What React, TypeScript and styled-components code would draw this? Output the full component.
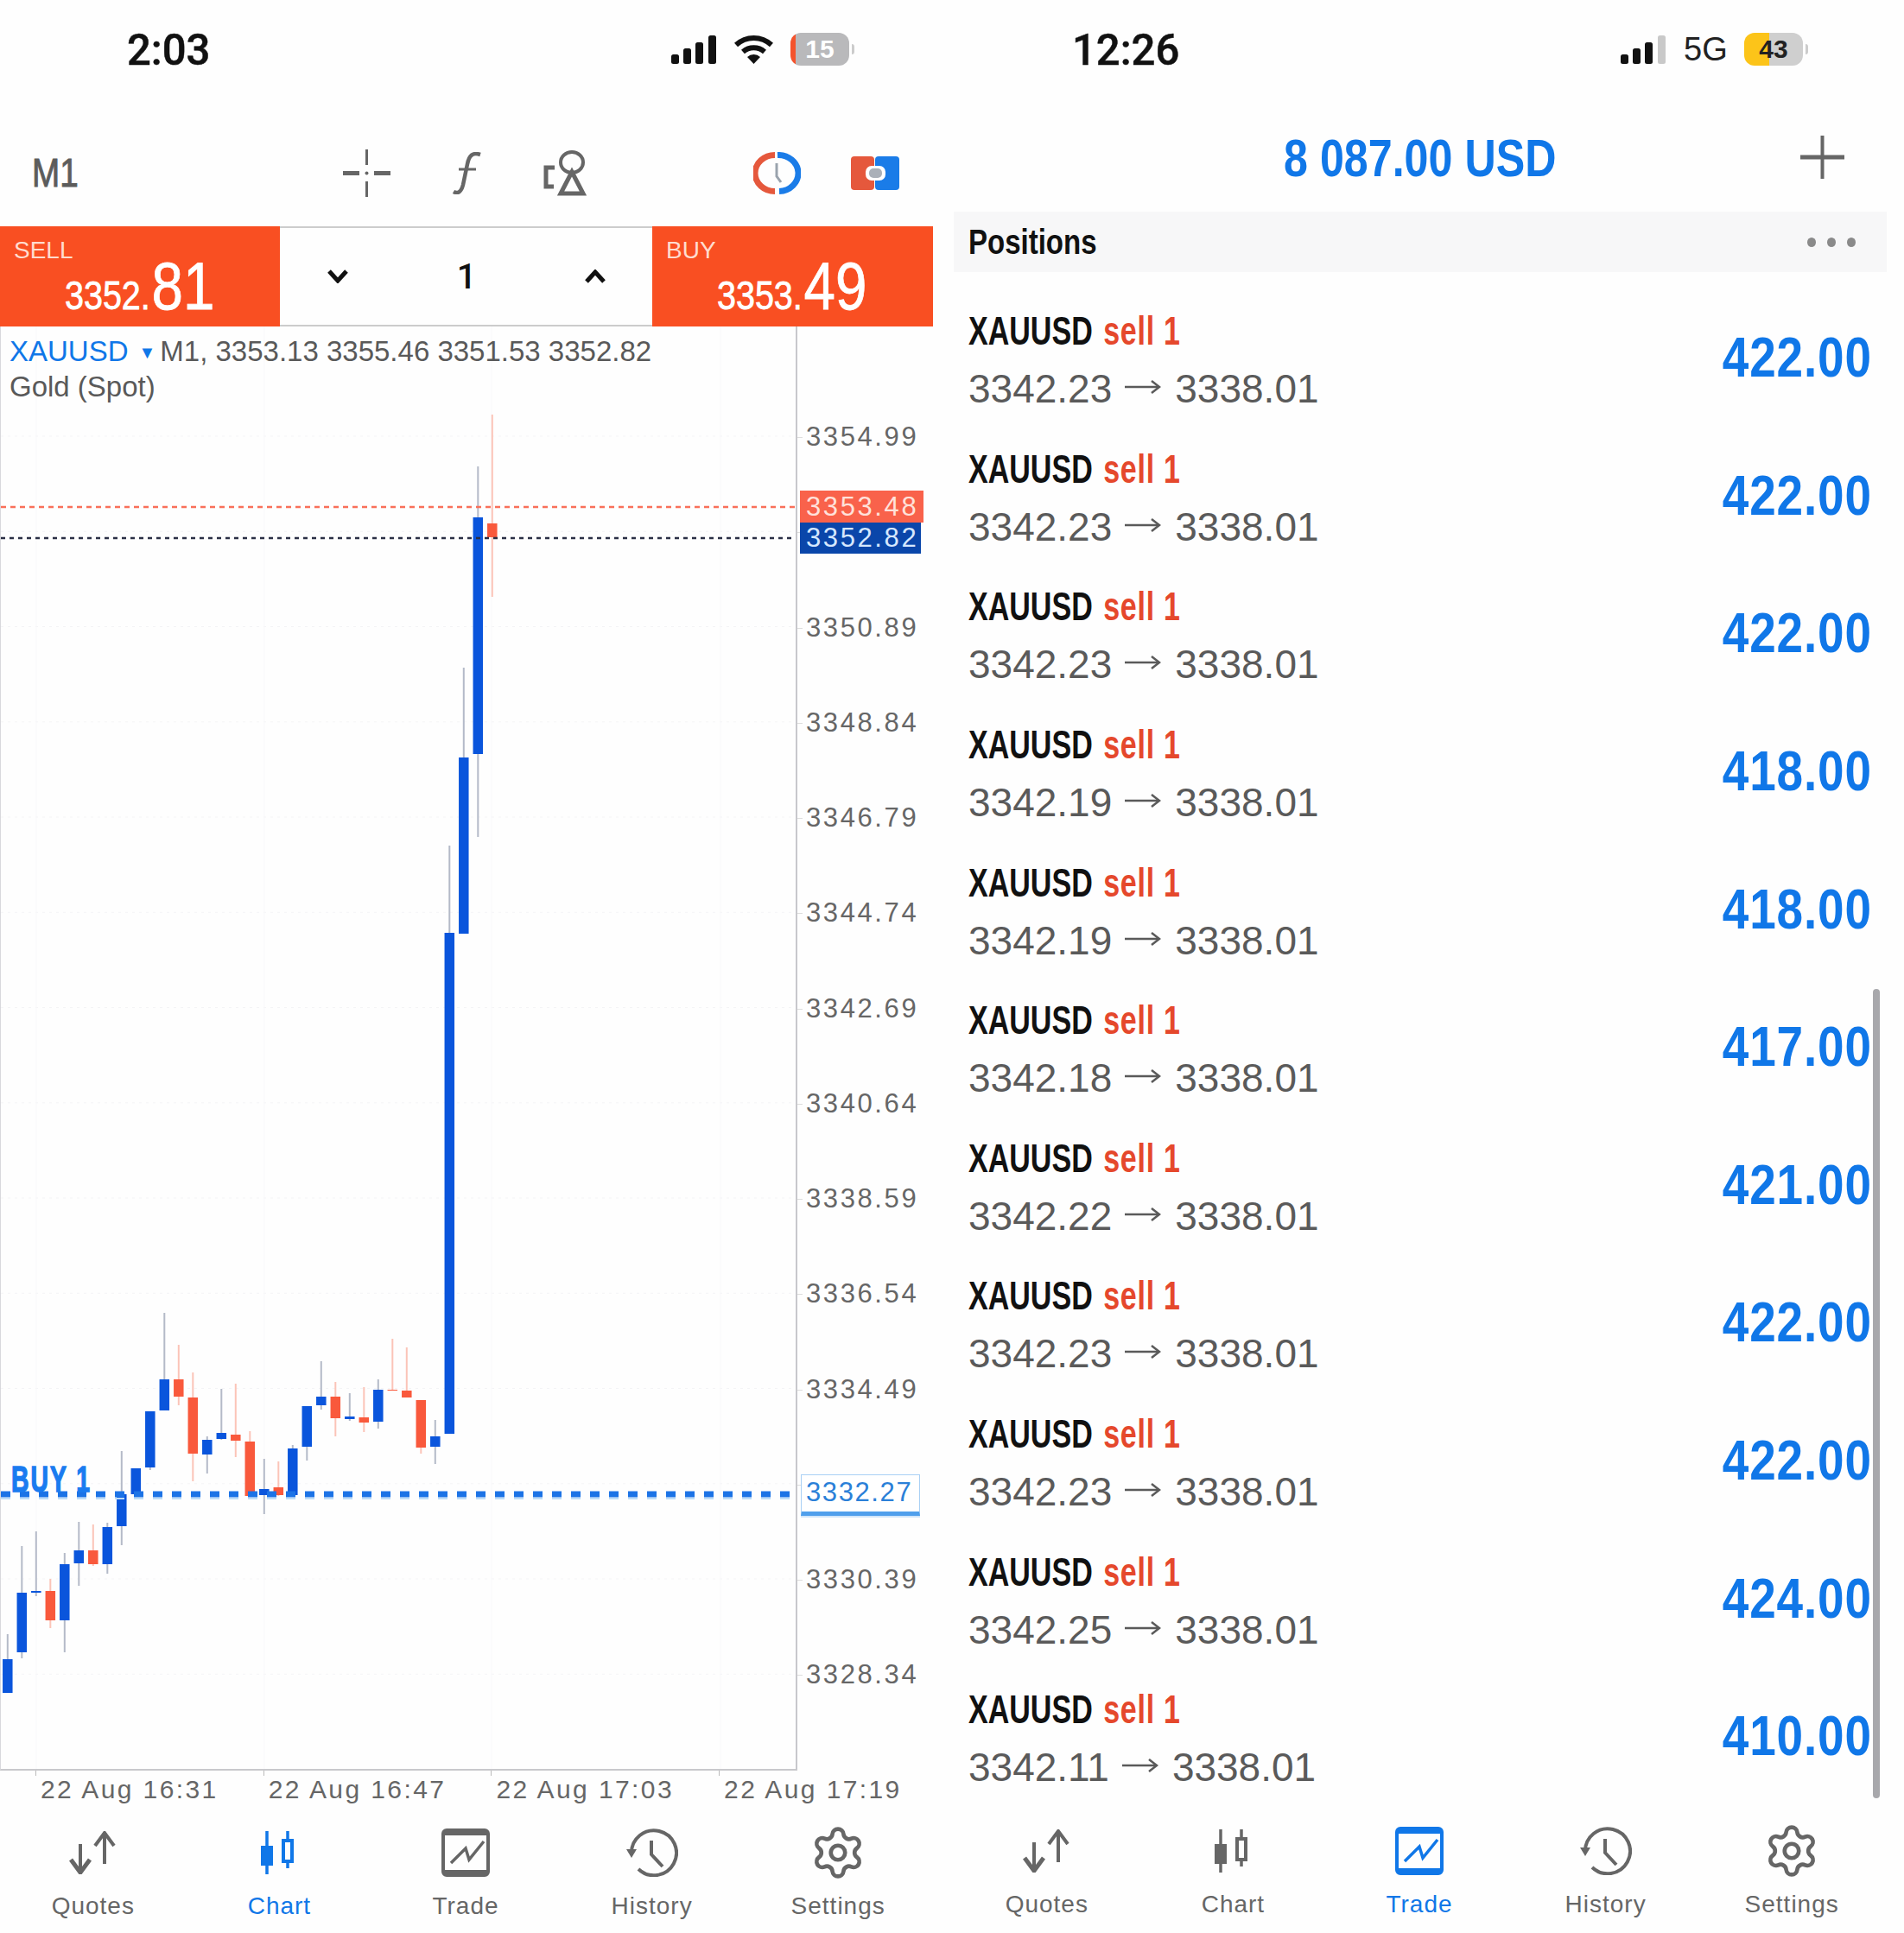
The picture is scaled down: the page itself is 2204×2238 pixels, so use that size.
import styled, { createGlobalStyle } from 'styled-components';
import { Settings as GearIcon } from 'lucide-react';
import { ReactNode } from 'react';

const SANS = `"Liberation Sans", Arial, sans-serif`;
const BLUE = '#1077e8';
const ORANGE = '#f94f22';
const GREY = '#666';

const GlobalStyle = createGlobalStyle`
  html, body {
    margin: 0;
    padding: 0;
    background: #fefefe;
    font-family: ${SANS};
    overflow: hidden;
  }
`;

const Page = styled.div`
  width: 2204px;
  height: 2238px;
  display: flex;
  gap: 24px;
`;

const Phone = styled.div`
  width: 1080px;
  display: flex;
  flex-direction: column;
`;

const StatusBar = styled.div<{ $left: number }>`
  height: 114px;
  flex: none;
  display: flex;
  align-items: center;
  justify-content: space-between;
  box-sizing: border-box;
  padding: 2px 97px 0 ${(p) => p.$left}px;
`;

const Clock = styled.div`
  font-family: Roboto, sans-serif;
  font-weight: 500;
  font-size: 50px;
  color: #111;
  -webkit-text-stroke: 0.5px #111;
  transform: scaleX(0.98);
  transform-origin: left;
`;

const StatusIcons = styled.div`
  display: flex;
  align-items: center;
  gap: 20px;
  margin-top: -2px;
`;

const Network = styled.span`
  font-size: 38px;
  color: #222;
  width: 50px;
`;

const Battery = styled.div<{ $fill: string; $rest: string; $pct: number; $ink: string }>`
  position: relative;
  width: 68px;
  height: 38px;
  border-radius: 12px;
  background: linear-gradient(
    to right,
    ${(p) => p.$fill} ${(p) => p.$pct}%,
    ${(p) => p.$rest} ${(p) => p.$pct}%
  );
  display: flex;
  align-items: center;
  justify-content: center;
  color: ${(p) => p.$ink};
  font-weight: 700;
  font-size: 30px;

  &::after {
    content: '';
    position: absolute;
    right: -6px;
    top: 13px;
    width: 3px;
    height: 12px;
    border-radius: 0 3px 3px 0;
    background: #ccc;
  }
`;

/* left phone: toolbar */
const Toolbar = styled.div`
  height: 148px;
  flex: none;
  display: flex;
  align-items: center;
  box-sizing: border-box;
  padding: 24px 0 0 37px;
`;

const Period = styled.div`
  width: 53px;
  font-size: 46px;
  color: #5c5c5c;
  -webkit-text-stroke: 1px #5c5c5c;
  transform: scaleX(0.84);
  transform-origin: left;
`;

const ToolGroup = styled.div<{ $offset: number; $gap: number }>`
  display: flex;
  align-items: center;
  margin-left: ${(p) => p.$offset}px;
  gap: ${(p) => p.$gap}px;
  color: ${GREY};

  svg {
    display: block;
  }
`;

/* left phone: sell / buy bar */
const TradeBar = styled.div`
  height: 116px;
  flex: none;
  display: grid;
  grid-template-columns: 324px 431px 325px;
`;

const PricePanel = styled.div`
  background: ${ORANGE};
  box-sizing: border-box;
  padding: 14px 0 0 16px;
  color: #fff;
  display: flex;
  flex-direction: column;
`;

const SideLabel = styled.div`
  font-size: 28px;
  line-height: 28px;
  color: #ffdccf;
`;

const PriceLine = styled.div`
  display: flex;
  align-items: baseline;
  margin: -15px 0 0 59px;
  height: 84px;
  white-space: nowrap;
  transform: scaleX(0.84);
  transform-origin: left;
  -webkit-text-stroke: 0.8px #fff;
`;

const PriceBase = styled.span`
  font-size: 47px;
  line-height: 84px;
`;

const PricePips = styled.span`
  font-size: 78px;
  line-height: 84px;
  margin-left: 2px;
`;

const Stepper = styled.div`
  border-top: 2px solid #ccc;
  border-bottom: 2px solid #ccc;
  display: flex;
  align-items: center;
  justify-content: space-between;
  padding: 0 54px 0 55px;
`;

const Lots = styled.div`
  font-family: Roboto, sans-serif;
  font-weight: 500;
  font-size: 40px;
  color: #111;
`;

/* left phone: chart */
const ChartRow = styled.div`
  height: 1672px;
  flex: none;
  display: flex;
`;

const ChartFrame = styled.div`
  position: relative;
  width: 923px;
  height: 100%;
  flex: none;
  box-sizing: border-box;
  border-right: 2px solid #c8c8cc;
  border-bottom: 2px solid #c8c8cc;
  border-left: 1px solid #d8d8dc;

  svg {
    display: block;
    width: 100%;
    height: 100%;
  }
`;

const Legend = styled.div`
  position: absolute;
  left: 10px;
  top: 8px;
  font-size: 33px;
  line-height: 41px;
  color: #595959;
  white-space: nowrap;
`;

const Symbol = styled.span`
  color: ${BLUE};
`;

const Caret = styled.span`
  color: ${BLUE};
  font-size: 20px;
  line-height: 0;
  margin: 0 5px 0 12px;
  vertical-align: 3px;
`;

const OrderTag = styled.div`
  position: absolute;
  left: 12px;
  top: 1318px;
  color: #1a7bf0;
  font-size: 43px;
  font-weight: 700;
  letter-spacing: 3px;
  line-height: 32px;
  -webkit-text-stroke: 1.5px #1a7bf0;
  transform: scaleX(0.66);
  transform-origin: left;
`;

const Axis = styled.div`
  position: relative;
  flex: 1;
  box-sizing: border-box;
  padding: 73px 0 0 10px;
`;

const AxisLabel = styled.div`
  position: relative;
  height: 110.25px;
  line-height: 110.25px;
  font-size: 31px;
  letter-spacing: 2.6px;
  color: #666;

  &::before {
    content: '';
    position: absolute;
    left: -10px;
    top: 55px;
    width: 6px;
    height: 1px;
    background: #ddd;
  }
`;

const PriceTag = styled.div<{ $bg: string; $ink: string; $top: number; $width: number; $height: number }>`
  position: absolute;
  left: 3px;
  top: ${(p) => p.$top}px;
  width: ${(p) => p.$width}px;
  height: ${(p) => p.$height}px;
  line-height: ${(p) => p.$height}px;
  box-sizing: border-box;
  padding-left: 7px;
  background: ${(p) => p.$bg};
  color: ${(p) => p.$ink};
  font-size: 31px;
  letter-spacing: 2.6px;
`;

const OrderPrice = styled.div`
  position: absolute;
  left: 4px;
  top: 1329px;
  width: 138px;
  height: 48px;
  line-height: 40px;
  box-sizing: border-box;
  padding-left: 5px;
  background: #fff;
  color: #2a80d8;
  font-size: 31px;
  letter-spacing: 1.6px;
  border: 1px solid #a9d0f5;
  border-bottom: 5px solid #4f9fec;
  box-shadow: 0 2px 0 #cfe5fa;
`;

const TimeAxis = styled.div`
  height: 45px;
  flex: none;
  display: flex;
  padding-left: 41px;
`;

const TimeLabel = styled.div`
  position: relative;
  width: 263.7px;
  flex: none;
  box-sizing: border-box;
  padding-left: 6px;
  font-size: 30px;
  line-height: 43px;
  letter-spacing: 2.4px;
  color: #666;
  white-space: nowrap;

  &::before {
    content: '';
    position: absolute;
    left: 0;
    top: 0;
    width: 1px;
    height: 6px;
    background: #bbb;
  }
`;

/* tab bar */
const TabBar = styled.div`
  display: grid;
  grid-template-columns: repeat(5, 215.6px);
  padding-top: 20px;
`;

const Tab = styled.div<{ $active?: boolean }>`
  display: flex;
  flex-direction: column;
  align-items: center;
  color: ${(p) => (p.$active ? BLUE : GREY)};
`;

const TabIcon = styled.div`
  height: 60px;
  display: flex;
  align-items: center;
  justify-content: center;
`;

const TabLabel = styled.div`
  margin-top: 14px;
  font-size: 28px;
  line-height: 36px;
  letter-spacing: 1px;
`;

/* right phone */
const AccountHeader = styled.div`
  height: 131px;
  flex: none;
  display: grid;
  grid-template-columns: 1fr auto 1fr;
  align-items: center;
  box-sizing: border-box;
  padding: 5px 49px 0 0;
`;

const Balance = styled.div`
  grid-column: 2;
  font-weight: 700;
  font-size: 62px;
  color: ${BLUE};
  white-space: nowrap;
  margin-left: 48px;
  transform: scaleX(0.81);
`;

const PlusButton = styled.div`
  justify-self: end;
  color: ${GREY};
  display: flex;
`;

const SectionBar = styled.div`
  height: 70px;
  flex: none;
  box-sizing: border-box;
  padding: 0 36px 0 17px;
  display: flex;
  align-items: center;
  justify-content: space-between;
  background: #f7f7f8;
`;

const SectionTitle = styled.div`
  font-weight: 700;
  font-size: 40px;
  color: #111;
  transform: scaleX(0.825);
  transform-origin: left;
`;

const MoreDots = styled.div`
  display: flex;
  gap: 13px;
`;

const Dot = styled.span`
  width: 10px;
  height: 11px;
  border-radius: 50%;
  background: #8a8a8a;
`;

const PositionList = styled.div`
  position: relative;
  flex: none;
  height: 1778px;
  box-sizing: border-box;
  padding-top: 22px;
`;

const PositionRow = styled.div`
  height: 159.6px;
  box-sizing: border-box;
  padding: 0 17px 0 17px;
  display: flex;
  align-items: center;
  justify-content: space-between;
`;

const PositionInfo = styled.div`
  display: flex;
  flex-direction: column;
`;

const PositionTitle = styled.div`
  font-weight: 700;
  font-size: 46px;
  line-height: 67px;
  color: #111;
  white-space: nowrap;
  transform: scaleX(0.74);
  transform-origin: left;
`;

const SideText = styled.span`
  color: #e5482c;
  margin-left: 4px;
  letter-spacing: 1px;
`;

const PositionPrices = styled.div`
  display: flex;
  align-items: center;
  font-size: 46px;
  line-height: 66px;
  color: #5a5a5a;
`;

const ArrowMark = styled.svg`
  flex: none;
  margin: 0 16px 4px 15px;
  color: #5a5a5a;
`;

const Profit = styled.div`
  font-weight: 700;
  font-size: 65px;
  letter-spacing: 1px;
  color: ${BLUE};
  margin-top: -6px;
  transform: scaleX(0.845);
  transform-origin: right;
`;

const ScrollThumb = styled.div`
  position: absolute;
  right: 8px;
  top: 830px;
  width: 8px;
  height: 937px;
  border-radius: 4px;
  background: #a8a8ac;
`;

/* drawings */
const SignalBars = ({ dim }: { dim?: boolean }) => (
  <svg width="53" height="33" viewBox="0 0 53 33">
    <rect x="0" y="22" width="9" height="11" rx="2.5" fill="#111" />
    <rect x="14" y="15" width="9" height="18" rx="2.5" fill="#111" />
    <rect x="28" y="8" width="9" height="25" rx="2.5" fill="#111" />
    <rect x="43" y="0" width="9" height="33" rx="2.5" fill={dim ? '#c9c9c9' : '#111'} />
  </svg>
);

const Wifi = () => (
  <svg width="45" height="34" viewBox="0 0 45 34" fill="none" stroke="#111" strokeWidth="6">
    <path d="M2 12 A30 30 0 0 1 43 12" />
    <path d="M10 20 A19 19 0 0 1 35 20" />
    <path d="M15 26 A11 11 0 0 1 30 26 L22.5 34 Z" fill="#111" stroke="none" />
  </svg>
);

const Crosshair = () => (
  <svg width="55" height="55" viewBox="0 0 55 55" fill="none" stroke="currentColor">
    <path d="M0 27.5 H19 M36 27.5 H55" strokeWidth="5" />
    <path d="M27.5 0 V18 M27.5 37 V55" strokeWidth="3" />
    <circle cx="27.5" cy="27.5" r="2" fill="currentColor" stroke="none" />
  </svg>
);

const Formula = () => (
  <svg width="35" height="49" viewBox="0 0 35 49" fill="none" stroke="currentColor" strokeWidth="4.5">
    <path d="M33 3 C24 0 20 4 18 14 L13 38 C11 46 7 49 2 46" />
    <path d="M8 20 H28" strokeWidth="3" />
  </svg>
);

const ObjectsIcon = () => (
  <svg width="50" height="53" viewBox="0 0 50 53" fill="none" stroke="currentColor" strokeWidth="4">
    <ellipse cx="33" cy="14" rx="13" ry="12" />
    <path d="M33 25 L46 50 H20 Z" strokeWidth="5" />
    <path d="M13 20 H3 V42 H12" strokeWidth="5" />
  </svg>
);

const TimeframeRing = () => (
  <svg width="55" height="49" viewBox="0 0 55 49" fill="none" strokeWidth="7">
    <path d="M25 3.5 A23 21 0 0 0 25 45.5" stroke="#e5583c" />
    <path d="M28 3.5 A23 21 0 0 1 30 45.5" stroke="#1a7ce8" />
    <path d="M27 13 V28 L32 35" stroke="#9aa3ad" strokeWidth="3" />
  </svg>
);

const LinkPair = () => (
  <svg width="56" height="39" viewBox="0 0 56 39">
    <rect x="0" y="0" width="27" height="39" rx="4" fill="#e5583c" />
    <rect x="28" y="0" width="28" height="39" rx="4" fill="#1a7ce8" />
    <rect x="17" y="11" width="23" height="17" rx="7" fill="#fff" />
    <rect x="21" y="14" width="15" height="11" rx="5" fill="#aab0b8" />
  </svg>
);

const Chevron = ({ up }: { up?: boolean }) => (
  <svg width="24" height="16" viewBox="0 0 24 16" fill="none" stroke="#111" strokeWidth="5">
    <path d={up ? 'M2 14 L12 3 L22 14' : 'M2 2 L12 13 L22 2'} />
  </svg>
);

const Plus = () => (
  <svg width="51" height="50" viewBox="0 0 51 50" stroke="currentColor" fill="none">
    <path d="M0 25 H51" strokeWidth="5" />
    <path d="M25.5 0 V50" strokeWidth="4" />
  </svg>
);

const ArrowRight = () => (
  <ArrowMark width="42" height="18" viewBox="0 0 42 18" fill="none" stroke="currentColor" strokeWidth="2.5">
    <path d="M0 9 H40" />
    <path d="M31 2 L40 9 L31 16" />
  </ArrowMark>
);

const QuotesIcon = () => (
  <svg width="56" height="50" viewBox="0 0 56 50" fill="none" stroke="currentColor" strokeWidth="4">
    <path d="M13 15 V47" />
    <path d="M2 33 L13 48 L24 33" strokeWidth="5" />
    <path d="M41 2 V38" />
    <path d="M30 17 L41 2 L52 17" />
  </svg>
);

const ChartIcon = () => (
  <svg width="44" height="50" viewBox="0 0 44 50" fill="none" stroke="currentColor" strokeWidth="3.5">
    <path d="M8 0 V50" />
    <rect x="1" y="17" width="14" height="23" fill="currentColor" stroke="none" />
    <path d="M32 0 V12 M32 35 V43" />
    <rect x="27" y="11" width="10" height="24" strokeWidth="4" />
  </svg>
);

const TradeIcon = () => (
  <svg width="56" height="56" viewBox="0 0 56 56" fill="none" stroke="currentColor" strokeWidth="4">
    <rect x="2" y="2" width="52" height="52" rx="4" />
    <rect x="2" y="2" width="52" height="6" fill="currentColor" stroke="none" />
    <rect x="2" y="48" width="52" height="6" fill="currentColor" stroke="none" />
    <path d="M11 40 L28 23 L32 36 L49 15" strokeWidth="3.5" />
  </svg>
);

const HistoryIcon = () => (
  <svg width="60" height="56" viewBox="0 0 60 56" fill="none" stroke="currentColor" strokeWidth="4">
    <path d="M6 29 A26 26 0 1 1 14 47" />
    <path d="M0 24 L12 24 L6 34 Z" fill="currentColor" stroke="none" />
    <path d="M29 14 V30 L42 44" />
  </svg>
);

const up = '#0a55dc';
const down = '#f9593c';

/* direction, wick top, wick bottom, body top, body bottom: page pixels */
const candles: [0 | 1, number, number, number, number][] = [
  [1, 1892, 1960, 1921, 1960],
  [1, 1790, 1920, 1844, 1913],
  [1, 1773, 1848, 1842, 1844],
  [0, 1828, 1885, 1842, 1876],
  [1, 1798, 1913, 1811, 1876],
  [1, 1762, 1836, 1795, 1810],
  [0, 1765, 1813, 1795, 1811],
  [1, 1763, 1822, 1768, 1811],
  [1, 1680, 1789, 1730, 1767],
  [1, 1700, 1732, 1700, 1730],
  [1, 1634, 1702, 1634, 1699],
  [1, 1520, 1633, 1597, 1633],
  [0, 1557, 1627, 1597, 1617],
  [0, 1589, 1715, 1618, 1683],
  [1, 1663, 1706, 1667, 1684],
  [1, 1608, 1667, 1659, 1666],
  [0, 1602, 1687, 1661, 1668],
  [0, 1657, 1732, 1669, 1732],
  [1, 1689, 1753, 1724, 1731],
  [0, 1692, 1732, 1722, 1731],
  [1, 1673, 1732, 1677, 1731],
  [1, 1628, 1691, 1628, 1675],
  [1, 1576, 1632, 1617, 1627],
  [0, 1600, 1663, 1617, 1642],
  [1, 1613, 1645, 1640, 1643],
  [0, 1606, 1658, 1641, 1647],
  [1, 1597, 1654, 1609, 1646],
  [0, 1550, 1610, 1609, 1610],
  [0, 1560, 1618, 1610, 1618],
  [0, 1621, 1683, 1621, 1676],
  [1, 1644, 1695, 1663, 1675],
  [1, 979, 1660, 1080, 1660],
  [1, 773, 1081, 877, 1081],
  [1, 540, 969, 599, 873],
  [0, 480, 691, 606, 622],
];

const axisValues = [
  '3354.99', '', '3350.89', '3348.84', '3346.79', '3344.74', '3342.69',
  '3340.64', '3338.59', '3336.54', '3334.49', '', '3330.39', '3328.34',
];

const Candles = () => (
  <svg viewBox="0 378 920 1670" preserveAspectRatio="none">
    {axisValues.map((_, i) => (
      <path key={i} d={`M0 ${505 + i * 110.25} H920`} stroke="#f4f4f6" strokeWidth="1" strokeDasharray="3 5" />
    ))}
    {[41, 305, 568, 833].map((x) => (
      <path key={x} d={`M${x} 378 V2048`} stroke="#f8f8fa" strokeWidth="1" />
    ))}
    {candles.map(([dir, wt, wb, bt, bb], i) => {
      const x = 7.8 + i * 16.5;
      return (
        <g key={i}>
          <path d={`M${x} ${wt} V${wb}`} stroke={dir ? '#b4bac8' : '#fbc4b8'} strokeWidth="2" />
          <rect x={x - 5.75} y={bt} width="11.5" height={bb - bt} fill={dir ? up : down} />
        </g>
      );
    })}
    <path d="M0 587 H920" stroke="#f9705a" strokeWidth="2.5" strokeDasharray="6 5" />
    <path d="M0 623 H920" stroke="#2a2f45" strokeWidth="2.5" strokeDasharray="5 5" />
    <path d="M0 1735 H920" stroke="#bcdcf8" strokeWidth="2" strokeDasharray="11 11" />
    <path d="M0 1730 H920" stroke="#1c73e6" strokeWidth="7" strokeDasharray="11 11" />
  </svg>
);

const tabs: { label: string; icon: ReactNode }[] = [
  { label: 'Quotes', icon: <QuotesIcon /> },
  { label: 'Chart', icon: <ChartIcon /> },
  { label: 'Trade', icon: <TradeIcon /> },
  { label: 'History', icon: <HistoryIcon /> },
  { label: 'Settings', icon: <GearIcon size={66} strokeWidth={1.7} /> },
];

const Tabs = ({ active }: { active: string }) => (
  <TabBar>
    {tabs.map((t) => (
      <Tab key={t.label} $active={t.label === active}>
        <TabIcon>{t.icon}</TabIcon>
        <TabLabel>{t.label}</TabLabel>
      </Tab>
    ))}
  </TabBar>
);

const positions = [
  ['3342.23', '422.00'],
  ['3342.23', '422.00'],
  ['3342.23', '422.00'],
  ['3342.19', '418.00'],
  ['3342.19', '418.00'],
  ['3342.18', '417.00'],
  ['3342.22', '421.00'],
  ['3342.23', '422.00'],
  ['3342.23', '422.00'],
  ['3342.25', '424.00'],
  ['3342.11', '410.00'],
];

const App = () => (
  <Page>
    <GlobalStyle />
    <Phone>
      <StatusBar $left={147}>
        <Clock>2:03</Clock>
        <StatusIcons>
          <SignalBars />
          <Wifi />
          <Battery $fill="#f4532c" $rest="#b9b9bb" $pct={9} $ink="#fff">15</Battery>
        </StatusIcons>
      </StatusBar>
      <Toolbar>
        <Period>M1</Period>
        <ToolGroup $offset={307} $gap={71}>
          <Crosshair />
          <Formula />
          <ObjectsIcon />
        </ToolGroup>
        <ToolGroup $offset={193} $gap={58}>
          <TimeframeRing />
          <LinkPair />
        </ToolGroup>
      </Toolbar>
      <TradeBar>
        <PricePanel>
          <SideLabel>SELL</SideLabel>
          <PriceLine>
            <PriceBase>3352.</PriceBase>
            <PricePips>81</PricePips>
          </PriceLine>
        </PricePanel>
        <Stepper>
          <Chevron />
          <Lots>1</Lots>
          <Chevron up />
        </Stepper>
        <PricePanel>
          <SideLabel>BUY</SideLabel>
          <PriceLine>
            <PriceBase>3353.</PriceBase>
            <PricePips>49</PricePips>
          </PriceLine>
        </PricePanel>
      </TradeBar>
      <ChartRow>
        <ChartFrame>
          <Candles />
          <Legend>
            <Symbol>XAUUSD</Symbol>
            <Caret>▼</Caret>
            M1, 3353.13 3355.46 3351.53 3352.82
            <br />
            Gold (Spot)
          </Legend>
          <OrderTag>BUY 1</OrderTag>
        </ChartFrame>
        <Axis>
          {axisValues.map((v, i) => (
            <AxisLabel key={i}>{v}</AxisLabel>
          ))}
          <PriceTag $bg="#f9624b" $ink="#ffe1da" $top={190} $width={143} $height={37}>3353.48</PriceTag>
          <PriceTag $bg="#0a46aa" $ink="#d6e8ff" $top={227} $width={140} $height={36}>3352.82</PriceTag>
          <OrderPrice>3332.27</OrderPrice>
        </Axis>
      </ChartRow>
      <TimeAxis>
        <TimeLabel>22 Aug 16:31</TimeLabel>
        <TimeLabel>22 Aug 16:47</TimeLabel>
        <TimeLabel>22 Aug 17:03</TimeLabel>
        <TimeLabel>22 Aug 17:19</TimeLabel>
      </TimeAxis>
      <Tabs active="Chart" />
    </Phone>

    <Phone>
      <StatusBar $left={137}>
        <Clock>12:26</Clock>
        <StatusIcons>
          <SignalBars dim />
          <Network>5G</Network>
          <Battery $fill="#fcc419" $rest="#cfcfcf" $pct={42} $ink="#222">43</Battery>
        </StatusIcons>
      </StatusBar>
      <AccountHeader>
        <Balance>8 087.00 USD</Balance>
        <PlusButton>
          <Plus />
        </PlusButton>
      </AccountHeader>
      <SectionBar>
        <SectionTitle>Positions</SectionTitle>
        <MoreDots>
          <Dot />
          <Dot />
          <Dot />
        </MoreDots>
      </SectionBar>
      <PositionList>
        {positions.map(([open, profit], i) => (
          <PositionRow key={i}>
            <PositionInfo>
              <PositionTitle>
                XAUUSD <SideText>sell 1</SideText>
              </PositionTitle>
              <PositionPrices>
                {open}
                <ArrowRight />
                3338.01
              </PositionPrices>
            </PositionInfo>
            <Profit>{profit}</Profit>
          </PositionRow>
        ))}
        <ScrollThumb />
      </PositionList>
      <Tabs active="Trade" />
    </Phone>
  </Page>
);

export default App;
